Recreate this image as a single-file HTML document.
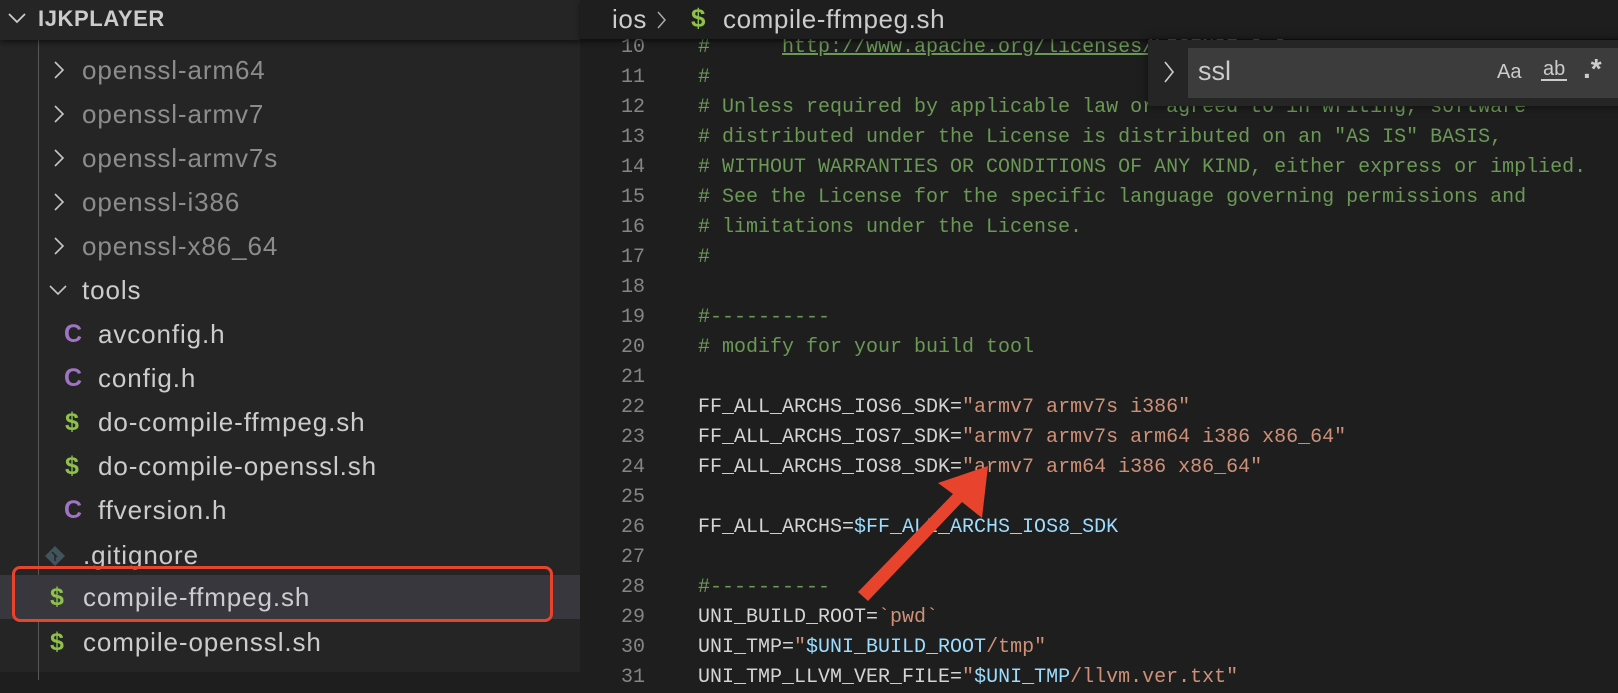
<!DOCTYPE html>
<html><head><meta charset="utf-8"><style>
*{margin:0;padding:0;box-sizing:border-box}
body{width:1618px;height:672px;overflow:hidden;background:#1e1e1e;position:relative;font-family:"Liberation Sans",sans-serif}
#side{position:absolute;left:0;top:0;width:580px;height:672px;background:#252526}
#shead{position:absolute;left:0;top:0;width:580px;height:40px;background:#252526;box-shadow:0 3px 5px rgba(0,0,0,.45);z-index:2}
#shead span{position:absolute;left:38px;top:6px;font-size:22px;font-weight:bold;color:#cccccc;letter-spacing:.6px}
.guide{position:absolute;left:38px;top:40px;width:1px;height:640px;background:#585858}
.row{position:absolute;left:0;width:580px;height:44px;line-height:44px;font-size:26px;color:#cccccc;letter-spacing:.9px;white-space:nowrap}
.row .t{position:absolute}
.dim{color:#8c8c8c}
.ic{position:absolute;font-weight:bold;font-size:25px}
.c{color:#a074c4}.s{color:#8dc149}
#bc{position:absolute;left:580px;top:0;width:1038px;height:39px;background:#1e1e1e;box-shadow:0 3px 5px rgba(0,0,0,.5);z-index:2;font-size:26px;color:#cccccc;letter-spacing:.6px}
.ln{position:absolute;left:580px;width:65px;text-align:right;font-family:"Liberation Mono",monospace;font-size:20px;color:#858585;height:30px;line-height:30px}
.cd{position:absolute;left:698px;font-family:"Liberation Mono",monospace;font-size:20px;color:#d4d4d4;white-space:pre;height:30px;line-height:30px}
.cm{color:#6a9955}.st{color:#ce9178}.v{color:#9cdcfe}
#find{position:absolute;left:1148px;top:40px;width:480px;height:66px;background:#252526;box-shadow:0 0 8px rgba(0,0,0,.6);z-index:3}
#inp{position:absolute;left:1188px;top:48px;width:430px;height:50px;background:#3c3c3c;z-index:4}
</style></head><body>
<div id="side">
<div id="shead"><svg style="position:absolute;left:7px;top:11px" width="20" height="14"><path d="M2 3 L10 11 L18 3" stroke="#cccccc" stroke-width="1.8" fill="none"/></svg><span>IJKPLAYER</span></div>
<div class="guide"></div>
<div style="position:absolute;left:0;top:575px;width:580px;height:44px;background:#37373d"></div>
<div class="row" style="top:48px"><svg style="position:absolute;left:52px;top:12px" width="14" height="20"><path d="M3 2 L11 10 L3 18" stroke="#c5c5c5" stroke-width="1.6" fill="none"/></svg><span class="t dim" style="left:82px">openssl-arm64</span></div>
<div class="row" style="top:92px"><svg style="position:absolute;left:52px;top:12px" width="14" height="20"><path d="M3 2 L11 10 L3 18" stroke="#c5c5c5" stroke-width="1.6" fill="none"/></svg><span class="t dim" style="left:82px">openssl-armv7</span></div>
<div class="row" style="top:136px"><svg style="position:absolute;left:52px;top:12px" width="14" height="20"><path d="M3 2 L11 10 L3 18" stroke="#c5c5c5" stroke-width="1.6" fill="none"/></svg><span class="t dim" style="left:82px">openssl-armv7s</span></div>
<div class="row" style="top:180px"><svg style="position:absolute;left:52px;top:12px" width="14" height="20"><path d="M3 2 L11 10 L3 18" stroke="#c5c5c5" stroke-width="1.6" fill="none"/></svg><span class="t dim" style="left:82px">openssl-i386</span></div>
<div class="row" style="top:224px"><svg style="position:absolute;left:52px;top:12px" width="14" height="20"><path d="M3 2 L11 10 L3 18" stroke="#c5c5c5" stroke-width="1.6" fill="none"/></svg><span class="t dim" style="left:82px">openssl-x86_64</span></div>
<div class="row" style="top:268px"><svg style="position:absolute;left:48px;top:15px" width="20" height="14"><path d="M2 3 L10 11 L18 3" stroke="#c5c5c5" stroke-width="1.6" fill="none"/></svg><span class="t" style="left:82px">tools</span></div>
<div class="row" style="top:312px"><span class="ic c" style="left:64px">C</span><span class="t" style="left:98px">avconfig.h</span></div>
<div class="row" style="top:356px"><span class="ic c" style="left:64px">C</span><span class="t" style="left:98px">config.h</span></div>
<div class="row" style="top:400px"><span class="ic s" style="left:65px">$</span><span class="t" style="left:98px">do-compile-ffmpeg.sh</span></div>
<div class="row" style="top:444px"><span class="ic s" style="left:65px">$</span><span class="t" style="left:98px">do-compile-openssl.sh</span></div>
<div class="row" style="top:488px"><span class="ic c" style="left:64px">C</span><span class="t" style="left:98px">ffversion.h</span></div>
<div class="row" style="top:533px"><svg style="position:absolute;left:44px;top:12px" width="22" height="22"><path d="M11 1 L21 11 L11 21 L1 11Z" fill="#41535b"/><path d="M8 7 L13 12 M11 10 L11 16" stroke="#252526" stroke-width="1.5"/></svg><span class="t" style="left:83px">.gitignore</span></div>
<div class="row" style="top:575px"><span class="ic s" style="left:50px">$</span><span class="t" style="left:83px">compile-ffmpeg.sh</span></div>
<div class="row" style="top:620px"><span class="ic s" style="left:50px">$</span><span class="t" style="left:83px">compile-openssl.sh</span></div>
<div style="position:absolute;left:12px;top:566px;width:541px;height:56px;border:3px solid #e8432c;border-radius:8px"></div>
</div>
<div id="bc"><span style="position:absolute;left:32px;top:4px">ios</span><svg style="position:absolute;left:76px;top:10px" width="12" height="20"><path d="M2 2 L9 10 L2 18" stroke="#aaaaaa" stroke-width="1.5" fill="none"/></svg><span style="position:absolute;left:111px;top:3px;color:#8dc149;font-weight:bold;font-size:26px">$</span><span style="position:absolute;left:143px;top:4px">compile-ffmpeg.sh</span></div>

<div class="ln" style="top:33px">10</div><div class="cd cm" style="top:33px">#      <span style="text-decoration:underline">http://www.apache.org/licenses/LICENSE-2.0</span></div>
<div class="ln" style="top:63px">11</div><div class="cd cm" style="top:63px">#</div>
<div class="ln" style="top:93px">12</div><div class="cd cm" style="top:93px"># Unless required by applicable law or agreed to in writing, software</div>
<div class="ln" style="top:123px">13</div><div class="cd cm" style="top:123px"># distributed under the License is distributed on an "AS IS" BASIS,</div>
<div class="ln" style="top:153px">14</div><div class="cd cm" style="top:153px"># WITHOUT WARRANTIES OR CONDITIONS OF ANY KIND, either express or implied.</div>
<div class="ln" style="top:183px">15</div><div class="cd cm" style="top:183px"># See the License for the specific language governing permissions and</div>
<div class="ln" style="top:213px">16</div><div class="cd cm" style="top:213px"># limitations under the License.</div>
<div class="ln" style="top:243px">17</div><div class="cd cm" style="top:243px">#</div>
<div class="ln" style="top:273px">18</div>
<div class="ln" style="top:303px">19</div><div class="cd cm" style="top:303px">#----------</div>
<div class="ln" style="top:333px">20</div><div class="cd cm" style="top:333px"># modify for your build tool</div>
<div class="ln" style="top:363px">21</div>
<div class="ln" style="top:393px">22</div><div class="cd" style="top:393px">FF_ALL_ARCHS_IOS6_SDK=<span class="st">"armv7 armv7s i386"</span></div>
<div class="ln" style="top:423px">23</div><div class="cd" style="top:423px">FF_ALL_ARCHS_IOS7_SDK=<span class="st">"armv7 armv7s arm64 i386 x86_64"</span></div>
<div class="ln" style="top:453px">24</div><div class="cd" style="top:453px">FF_ALL_ARCHS_IOS8_SDK=<span class="st">"armv7 arm64 i386 x86_64"</span></div>
<div class="ln" style="top:483px">25</div>
<div class="ln" style="top:513px">26</div><div class="cd" style="top:513px">FF_ALL_ARCHS=<span class="v">$FF_ALL_ARCHS_IOS8_SDK</span></div>
<div class="ln" style="top:543px">27</div>
<div class="ln" style="top:573px">28</div><div class="cd cm" style="top:573px">#----------</div>
<div class="ln" style="top:603px">29</div><div class="cd" style="top:603px">UNI_BUILD_ROOT=<span class="st">`pwd`</span></div>
<div class="ln" style="top:633px">30</div><div class="cd" style="top:633px">UNI_TMP=<span class="st">"</span><span class="v">$UNI_BUILD_ROOT</span><span class="st">/tmp"</span></div>
<div class="ln" style="top:663px">31</div><div class="cd" style="top:663px">UNI_TMP_LLVM_VER_FILE=<span class="st">"</span><span class="v">$UNI_TMP</span><span class="st">/llvm.ver.txt"</span></div>

<div id="find"><svg style="position:absolute;left:14px;top:20px" width="14" height="24"><path d="M3 2 L11 12 L3 22" stroke="#cccccc" stroke-width="1.6" fill="none"/></svg></div>
<div id="inp"><span style="position:absolute;left:10px;top:8px;font-size:27px;color:#cccccc">ssl</span>
<span style="position:absolute;left:309px;top:13px;font-size:20px;color:#cccccc">Aa</span>
<span style="position:absolute;left:353px;top:11px;font-size:20px;color:#cccccc;border-bottom:2px solid #cccccc;line-height:20px;padding:0 2px">ab</span>
<span style="position:absolute;left:395px;top:5px;font-size:28px;color:#cccccc;font-weight:bold">.*</span></div>

<svg style="position:absolute;left:0;top:0;z-index:5" width="1618" height="672"><path d="M858 592 L868 601 L962 502 L982 518 L988 466 L938 483 L953 494 Z" fill="#e8432c"/></svg>
</body></html>
